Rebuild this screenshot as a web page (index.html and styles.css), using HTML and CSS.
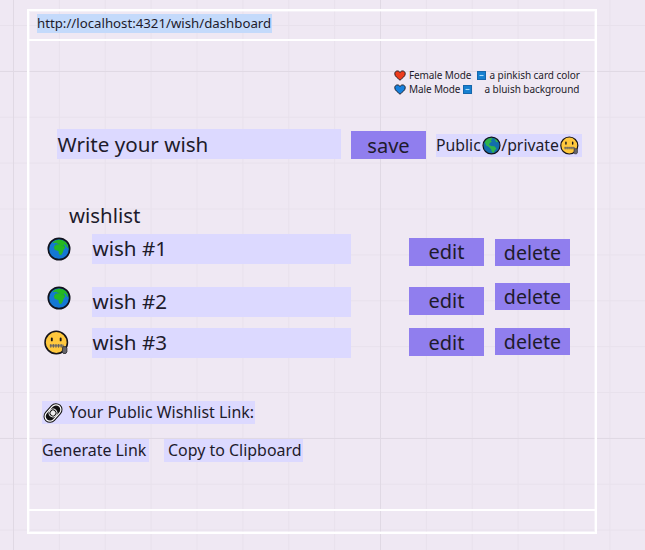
FILE: index.html
```html
<!DOCTYPE html>
<html lang="en">
<head>
<meta charset="utf-8">
<title>Wish dashboard</title>
<link rel="stylesheet" href="styles.css">
</head>
<body>
<svg class="defs" width="0" height="0" aria-hidden="true">
  <symbol id="heart" viewBox="0 0 24 22"><path d="M12 20.5C8 16.500 1.500 13 1.500 7.500C1.500 1 9.500 0 12 5C14.500 0 22.500 1 22.500 7.500C22.500 13 16 16.500 12 20.500Z" stroke="#17151d" stroke-width="1.800" stroke-linejoin="round"/></symbol>
  <symbol id="minus" viewBox="0 0 18 18"><rect width="18" height="18" fill="#1667ac"/><rect x="2" y="2" width="14" height="14" fill="#1680d0"/><path d="M5 9h8" stroke="#a9dcfa" stroke-width="2.200"/></symbol>
  <symbol id="africa" viewBox="0 0 46 46"><circle cx="23" cy="23" r="20" fill="#1478d4"/><path d="M10 12L15 7L24 5L33 7L39 13L41 23L38 19L35 15L32 14L35 20L32 24L30 30L27 35L23 33L22 27L15 25L13 19L17 15L23 15L18 11Z" fill="#25b822"/><path d="M15 14L25 13M28 16L34 18" stroke="#1f9d38" stroke-width="1"/><circle cx="23" cy="23" r="20.500" fill="none" stroke="#10121c" stroke-width="3.200"/></symbol>
  <symbol id="americas" viewBox="0 0 46 46"><circle cx="23" cy="23" r="20" fill="#136eac"/><path d="M5 15L11 7L22 4L26 7L21 10L24 14L19 17L17 21L22 24L30 25L35 30L31 35L28 41L24 39L22 32L16 26L10 23L7 16ZM30 6L36 9L40 14L35 15L32 11Z" fill="#30b34b"/><circle cx="23" cy="23" r="20.500" fill="none" stroke="#10121c" stroke-width="3"/></symbol>
  <symbol id="zipper" viewBox="0 0 48 48"><circle cx="23.500" cy="24" r="21.500" fill="#ffc83d" stroke="#17151a" stroke-width="3"/><path d="M15 16v4M32 16v4" stroke="#17151a" stroke-width="3.600" stroke-linecap="round"/><path d="M11 30h27" stroke="#8b8168" stroke-width="4"/><path d="M13 27v7M18 27v7M23 27v7M28 27v7M33 27v7" stroke="#5b5a5c" stroke-width="1.800"/><path d="M36 32h6l2 3v7l-2 3h-5l-2-3Z" fill="#65656a" stroke="#2b292e" stroke-width="1.600"/></symbol>
  <symbol id="link" viewBox="0 0 40 40"><g transform="rotate(-48 20 20)" fill="none"><rect x="-1" y="8" width="42" height="24" rx="12" fill="#fff" stroke="#111" stroke-width="2"/><rect x="4" y="13" width="32" height="14" rx="7" fill="#111" stroke="#111" stroke-width="3"/><circle cx="20" cy="20" r="8" fill="#111" stroke="#fff" stroke-width="2"/><circle cx="20" cy="20" r="4.500" fill="#eee" stroke="#fff"/></g></symbol>
</svg>
<main class="frame">
  <header class="address"><span class="url">http://localhost:4321/wish/dashboard</span></header>
  <section class="content">
    <div class="legend">
      <div class="mode"><svg class="heart red"><use href="#heart"/></svg><span class="female">Female Mode</span><svg class="minus"><use href="#minus"/></svg><span>a pinkish card color</span></div>
      <div class="mode"><svg class="heart blue"><use href="#heart"/></svg><span class="male">Male Mode</span><svg class="minus"><use href="#minus"/></svg><span class="bluish">a bluish background</span></div>
    </div>
    <div class="composer">
      <div class="field">Write your wish</div>
      <div class="button save">save</div>
      <div class="visibility"><span>Public</span><svg class="globe"><use href="#americas"/></svg><span>/private</span><svg class="face"><use href="#zipper"/></svg></div>
    </div>
    <h1 class="heading">wishlist</h1>
    <div class="wishes">
      <div class="wish first"><svg class="icon"><use href="#africa"/></svg><div class="name">wish #1</div><div class="button edit">edit</div><div class="button delete">delete</div></div>
      <div class="wish second"><svg class="icon"><use href="#africa"/></svg><div class="name">wish #2</div><div class="button edit">edit</div><div class="button delete">delete</div></div>
      <div class="wish third"><svg class="icon"><use href="#zipper"/></svg><div class="name">wish #3</div><div class="button edit">edit</div><div class="button delete">delete</div></div>
    </div>
    <div class="share">
      <div class="tag label"><svg class="chain"><use href="#link"/></svg><span>Your Public Wishlist Link:</span></div>
      <div class="actions"><div class="tag generate">Generate Link</div><div class="tag copy">Copy to Clipboard</div></div>
    </div>
  </section>
  <footer class="footer"></footer>
</main>
</body>
</html>
```
FILE: styles.css
```css
* { box-sizing: border-box; }
body {
  margin: 0;
  height: 550px;
  padding: 9px 0 0 27px;
  overflow: hidden;
  font-family: "Noto Sans", sans-serif;
  color: #1e1b2b;
  white-space: nowrap;
  background-color: #efe8f3;
  background-image:
    linear-gradient(90deg, #e0d9e4 1px, transparent 1px),
    linear-gradient(#e0d9e4 1px, transparent 1px),
    linear-gradient(90deg, #e8e1ec 1px, transparent 1px),
    linear-gradient(#e8e1ec 1px, transparent 1px);
  background-size: 367px 367px, 367px 367px, 45.875px 45.875px, 45.875px 45.875px;
  background-position: 13px 71px, 13px 71px, 13px 25px, 13px 25px;
}
svg { display: block; flex: none; }
.defs { position: absolute; }
.frame {
  display: flex;
  flex-direction: column;
  width: 570px;
  height: 525px;
  border: 2px solid #fff;
  box-shadow: inset 0 0 0 1px rgba(255, 255, 255, 0.4);
}
.address { height: 30px; padding: 3px 0 0 8px; border-bottom: 2px solid #fff; }
.url {
  display: block;
  width: 235px;
  height: 19px;
  background: #c4dafb;
  font-size: 13.240px;
  line-height: 18px;
}
.content { flex: 1; }
.footer { height: 23px; border-top: 2px solid #fff; }
.legend { padding: 27px 0 0 365px; font-size: 10px; letter-spacing: -0.050px; }
.mode { display: flex; align-items: center; height: 14px; }
.heart { width: 12px; height: 11px; margin-right: 3px; }
.red { fill: #ed3b1c; }
.blue { fill: #1680dc; }
.minus { width: 9px; height: 9px; margin-right: 3.500px; }
.female { width: 68px; letter-spacing: -0.120px; }
.male { width: 54px; letter-spacing: -0.120px; }
.bluish { margin-left: 9px; }
.composer { display: flex; align-items: flex-start; padding: 33px 0 0 28px; }
.field, .name { background: #dcd9ff; height: 30px; font-size: 20.600px; line-height: 29px; }
.field { width: 284px; padding-left: 0.500px; line-height: 30px; }
.name { padding-left: 0.500px; }
.button { width: 75px; height: 28px; background: #907eee; text-align: center; font-size: 20px; line-height: 28px; }
.save { margin: 2px 10px 0; font-size: 20.100px; line-height: 29px; }
.visibility { display: flex; align-items: center; width: 146px; height: 23px; margin-top: 5px; background: #dcd9ff; font-size: 15.800px; line-height: 22px; }
.visibility span { margin-top: -1px; }
.globe, .face { width: 19px; height: 19px; }
.globe { margin: 0 0.500px 0 1px; }
.face { margin-left: 1.500px; }
.heading { margin: 42px 0 0 40px; font-size: 20.400px; line-height: 28px; font-weight: 400; }
.wishes { padding: 5px 0 0 17px; }
.wish { display: grid; grid-template-columns: 46px 259px 75px 75px; align-items: start; }
.icon { width: 24px; height: 24px; }
.name { width: 259px; }
.edit { margin-left: 58px; line-height: 28px; }
.delete { margin-left: 69px; height: 27px; line-height: 27px; font-size: 19.600px; }
.first { height: 49px; }
.first .icon { margin: 3px 0 0 1px; }
.first .edit { margin-top: 4px; }
.first .delete { margin-top: 5px; }
.second { height: 45px; }
.second .icon { margin: 3px 0 0 1px; }
.second .name, .second .edit { margin-top: 4px; }
.third { height: 30px; }
.third .icon { margin: 2px 0 0 -2px; width: 25px; height: 25px; }
.third .edit { line-height: 29px; }
.share { padding: 43px 0 0 13px; font-size: 15.950px; }
.tag { width: 213px; height: 23px; line-height: 22px; background: #dcd9ff; }
.label { display: flex; align-items: center; }
.label span { margin-top: -1px; }
.chain { width: 20px; height: 20px; margin: 0 6px 0 1px; }
.actions { display: flex; gap: 15px; margin-top: 15px; }
.generate { width: 107px; }
.copy { width: 139px; padding-left: 4px; }
```
